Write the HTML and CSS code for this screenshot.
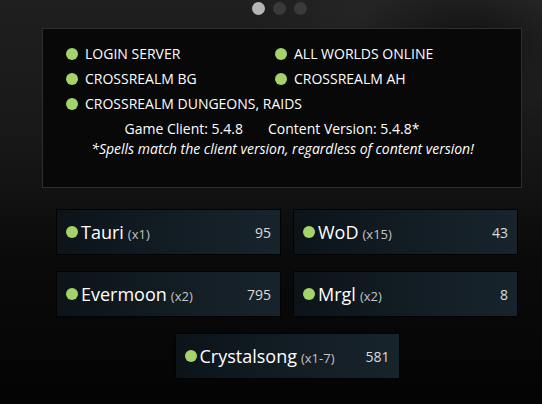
FILE: index.html
```html
<!DOCTYPE html>
<html>
<head>
    <title>Realm Status</title>
    <meta charset="UTF-8">
    <link rel="stylesheet" href="styles.css">
</head>
<body>

<div id="pager">
    <span class="pip active"></span>
    <span class="pip"></span>
    <span class="pip"></span>
</div>

<div id="status">
    <div class="services">
        <div class="service"><span class="dot"></span>LOGIN SERVER</div>
        <div class="service"><span class="dot"></span>ALL WORLDS ONLINE</div>
        <div class="service"><span class="dot"></span>CROSSREALM BG</div>
        <div class="service"><span class="dot"></span>CROSSREALM AH</div>
        <div class="service wide"><span class="dot"></span>CROSSREALM DUNGEONS, RAIDS</div>
    </div>
    <div class="versions">
        <span>Game Client: 5.4.8</span>
        <span>Content Version: 5.4.8*</span>
    </div>
    <div class="note">*Spells match the client version, regardless of content version!</div>
</div>

<div id="realms">
    <div class="realm">
        <span class="dot"></span><span class="name">Tauri</span><span class="rate">(x1)</span>
        <span class="count">95</span>
    </div>
    <div class="realm">
        <span class="dot"></span><span class="name">WoD</span><span class="rate">(x15)</span>
        <span class="count">43</span>
    </div>
    <div class="realm">
        <span class="dot"></span><span class="name">Evermoon</span><span class="rate">(x2)</span>
        <span class="count">795</span>
    </div>
    <div class="realm">
        <span class="dot"></span><span class="name">Mrgl</span><span class="rate">(x2)</span>
        <span class="count">8</span>
    </div>
    <div class="realm">
        <span class="dot"></span><span class="name">Crystalsong</span><span class="rate">(x1-7)</span>
        <span class="count">581</span>
    </div>
</div>

</body>
</html>
```

FILE: styles.css
```css
body{
    margin: 0;
    height: 404px;
    overflow: hidden;
    font-family: "Open Sans", Arial, sans-serif;
    color: #fff;
    background-color: #060606;
    background-image:
        radial-gradient(ellipse 120px 70px at 470px 40px, rgba(0,0,0,0.55), rgba(0,0,0,0) 100%),
        radial-gradient(ellipse 260px 120px at 500px 0px, #2a2a2a, rgba(42,42,42,0) 100%),
        linear-gradient(to bottom, #1f1f1f 0, #171717 150px, #0a0a0a 260px, #040404 404px);
}

#pager{
    display: flex;
    gap: 8px;
    padding: 2px 0 0 252px;
    height: 13px;
}

.pip{
    width: 13px;
    height: 13px;
    border-radius: 50%;
    background-color: #3a3a3a;
}

.pip.active{
    background-color: #b5b5b5;
}

#status{
    box-sizing: border-box;
    width: 480px;
    height: 160px;
    margin: 13px 0 0 42px;
    padding: 12px 0 0 23px;
    border: 1px solid #2e2e2e;
    background-color: #080808;
    font-size: 14px;
}

.services{
    display: grid;
    grid-template-columns: 209px 1fr;
}

.service{
    display: flex;
    align-items: center;
    height: 25px;
}

.service.wide{
    grid-column: span 2;
}

.dot{
    display: inline-block;
    flex: none;
    width: 12px;
    height: 12px;
    border-radius: 50%;
    background-color: #a3d36b;
    margin-right: 7px;
}

.versions{
    display: flex;
    justify-content: center;
    gap: 25px;
    padding-right: 43px;
    margin-top: 4px;
    line-height: 18px;
}

.note{
    text-align: center;
    font-style: italic;
    padding-right: 22px;
    line-height: 21px;
}

#realms{
    display: flex;
    flex-wrap: wrap;
    justify-content: center;
    gap: 16px 12px;
    width: 462px;
    margin: 21px 0 0 56px;
}

.realm{
    box-sizing: border-box;
    display: flex;
    align-items: center;
    width: 225px;
    height: 46px;
    padding: 0 9px 0 9px;
    border: 1px solid #030303;
    background: linear-gradient(to right, #0c141a, #18242c);
}

.realm .dot{
    margin-right: 3px;
}

.name{
    font-size: 18px;
}

.rate{
    font-size: 13px;
    color: #c4c4c4;
    margin: 3px 0 0 4px;
}

.count{
    margin-left: auto;
    font-size: 14px;
    color: #dcdcdc;
}
```
